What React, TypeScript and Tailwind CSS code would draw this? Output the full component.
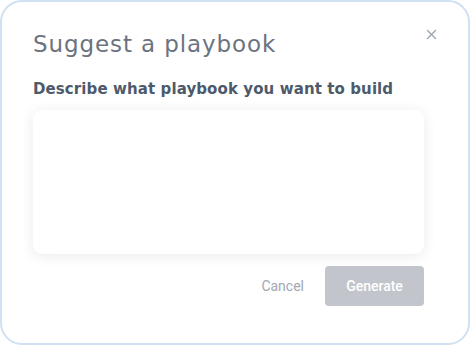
import React from "react";

export default function App() {
  return (
    <div className="w-[470px] h-[345px] bg-white">
      <div className="relative w-[470px] h-[345px] rounded-[22px] border-2 border-[#cfe1f2] bg-white px-[31px] pt-[26px] font-['DejaVu_Sans',sans-serif]">
        <button className="absolute right-[31px] top-[27px] text-[#9aa3ae]">
          <svg width="11" height="11" viewBox="0 0 11 11" fill="none">
            <path d="M1.5 1.5L9.5 9.5M9.5 1.5L1.5 9.5" stroke="currentColor" strokeWidth="1.3" strokeLinecap="round" />
          </svg>
        </button>
        <h2 className="text-[23px] leading-[32px] font-normal text-[#6b7380] tracking-[0.9px]">Suggest a playbook</h2>
        <p className="mt-[18px] text-[15px] leading-[22px] font-bold text-[#4d5a6b] tracking-[0.1px]">Describe what playbook you want to build</p>
        <textarea className="mt-[10px] block w-[391px] h-[144px] resize-none rounded-[9px] bg-white shadow-[0_2px_14px_rgba(0,0,0,0.09)] outline-none p-3 text-sm" />
        <div className="mt-[12px] flex justify-end items-center gap-[21px] pr-[13px] font-['Roboto',sans-serif]">
          <button className="text-[14px] text-[#a3a8b1]">Cancel</button>
          <button className="w-[99px] h-[40px] rounded-[4px] bg-[#c2c5cc] text-white text-[14px] font-medium">Generate</button>
        </div>
      </div>
    </div>
  );
}
